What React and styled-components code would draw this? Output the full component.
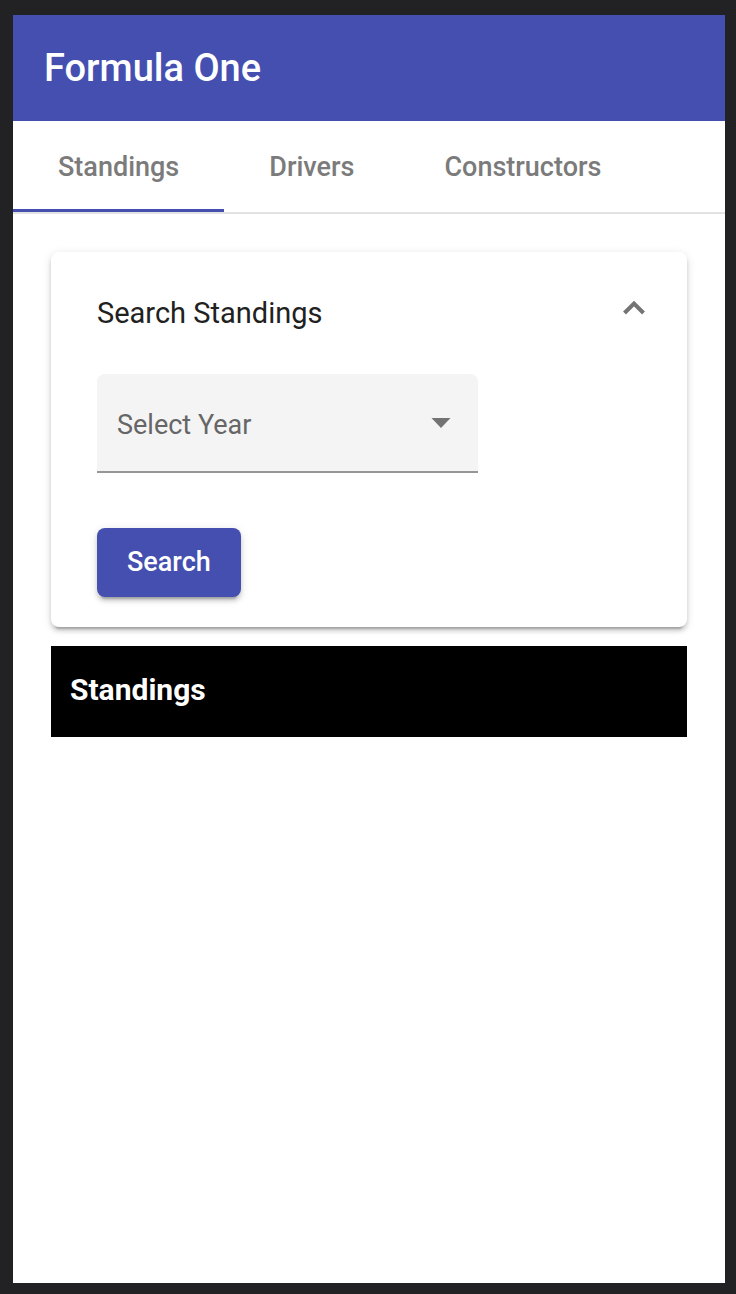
import React, { useState } from 'react';
import styled, { createGlobalStyle } from 'styled-components';

const GlobalStyle = createGlobalStyle`
  *, *::before, *::after { box-sizing: border-box; }
  body {
    margin: 0;
    background: #222224;
    font-family: Roboto, "Liberation Sans", sans-serif;
    -webkit-font-smoothing: antialiased;
  }
  button, select { font-family: inherit; margin: 0; }
`;

const Frame = styled.div`
  display: flex;
  min-height: 100vh;
  padding: 15px 11px 11px 13px;
`;

const Screen = styled.div`
  flex: 1;
  min-width: 0;
  background: #fff;
`;

const Toolbar = styled.header`
  display: flex;
  align-items: center;
  height: 106px;
  padding: 0 31px;
  background: #444fb0;
  color: #fff;
`;

const Title = styled.h1`
  margin: 0;
  font-size: 38px;
  font-weight: 500;
  line-height: 44px;
`;

const TabBar = styled.div`
  display: flex;
  height: 93px;
  border-bottom: 2px solid #e2e2e2;
`;

const Tab = styled.button`
  height: 91px;
  padding: 0 45px;
  border: 0;
  background: none;
  box-shadow: ${({ $active }) => ($active ? 'inset 0 -3px #444fb0' : 'none')};
  color: #7b7b7b;
  font-size: 27px;
  font-weight: 500;
  line-height: 32px;
  cursor: pointer;
`;

const Content = styled.main`
  display: flex;
  flex-direction: column;
  gap: 19px;
  padding: 38px;
`;

const Panel = styled.section`
  padding: 0 46px 30px;
  border-radius: 8px;
  background: #fff;
  box-shadow:
    0 6px 2px -4px rgba(0, 0, 0, 0.2),
    0 4px 4px 0 rgba(0, 0, 0, 0.14),
    0 2px 10px 0 rgba(0, 0, 0, 0.12);
`;

const PanelHeader = styled.button`
  display: flex;
  align-items: center;
  justify-content: space-between;
  width: 100%;
  height: 122px;
  padding: 0;
  border: 0;
  background: none;
  color: #212121;
  font-size: 29px;
  line-height: 34px;
  text-align: left;
  cursor: pointer;
`;

const Chevron = styled.svg`
  width: 24px;
  height: 24px;
  margin-bottom: 10px;
  margin-right: -5px;
  transform: ${({ $open }) => ($open ? 'none' : 'rotate(180deg)')};
`;

const SearchForm = styled.form`
  display: flex;
  flex-direction: column;
  align-items: flex-start;
  gap: 55px;
`;

const SelectField = styled.div`
  display: grid;
  align-items: center;
  width: 381px;
  max-width: 100%;
  height: 99px;
  border-bottom: 2px solid #969696;
  border-radius: 8px 8px 0 0;
  background: #f4f4f4;

  > * { grid-area: 1 / 1; }
`;

const Select = styled.select`
  width: 100%;
  height: 100%;
  padding: 5px 60px 0 20px;
  border: 0;
  background: none;
  appearance: none;
  color: #666;
  font-size: 27px;
  cursor: pointer;
`;

const Arrow = styled.svg`
  justify-self: end;
  width: 20px;
  height: 10px;
  margin-right: 27px;
  pointer-events: none;
`;

const SearchButton = styled.button`
  height: 69px;
  padding: 0 30px 2px;
  border: 0;
  border-radius: 8px;
  background: #444fb0;
  color: #fff;
  font-size: 27px;
  font-weight: 500;
  box-shadow:
    0 6px 2px -4px rgba(0, 0, 0, 0.2),
    0 4px 4px 0 rgba(0, 0, 0, 0.14),
    0 2px 10px 0 rgba(0, 0, 0, 0.12);
  cursor: pointer;
`;

const ResultsHeading = styled.h2`
  display: flex;
  align-items: center;
  height: 91px;
  margin: 0;
  padding: 0 19px 4px;
  background: #000;
  color: #fff;
  font-size: 30px;
  font-weight: 700;
  line-height: 36px;
`;

const TABS = ['Standings', 'Drivers', 'Constructors'];
const YEARS = [2020, 2019, 2018, 2017, 2016];

export default function App() {
  const [active, setActive] = useState('Standings');
  const [open, setOpen] = useState(true);

  return (
    <>
      <GlobalStyle />
      <Frame>
        <Screen>
          <Toolbar>
            <Title>Formula One</Title>
          </Toolbar>
          <TabBar role="tablist">
            {TABS.map((name) => (
              <Tab
                key={name}
                type="button"
                role="tab"
                aria-selected={name === active}
                $active={name === active}
                onClick={() => setActive(name)}
              >
                {name}
              </Tab>
            ))}
          </TabBar>
          <Content>
            <Panel>
              <PanelHeader type="button" aria-expanded={open} onClick={() => setOpen(!open)}>
                Search Standings
                <Chevron $open={open} viewBox="0 0 24 24" aria-hidden="true">
                  <path d="M2.5 17 L12 7.5 L21.5 17" fill="none" stroke="#757575" strokeWidth="4" />
                </Chevron>
              </PanelHeader>
              {open && (
                <SearchForm onSubmit={(event) => event.preventDefault()}>
                  <SelectField>
                    <Select aria-label="Select Year" defaultValue="">
                      <option value="" disabled hidden>Select Year</option>
                      {YEARS.map((year) => (
                        <option key={year} value={year}>{year}</option>
                      ))}
                    </Select>
                    <Arrow viewBox="0 0 20 10" aria-hidden="true">
                      <path d="M0.5 0 H19.5 L10 10 Z" fill="#737373" />
                    </Arrow>
                  </SelectField>
                  <SearchButton type="submit">Search</SearchButton>
                </SearchForm>
              )}
            </Panel>
            <ResultsHeading>Standings</ResultsHeading>
          </Content>
        </Screen>
      </Frame>
    </>
  );
}
